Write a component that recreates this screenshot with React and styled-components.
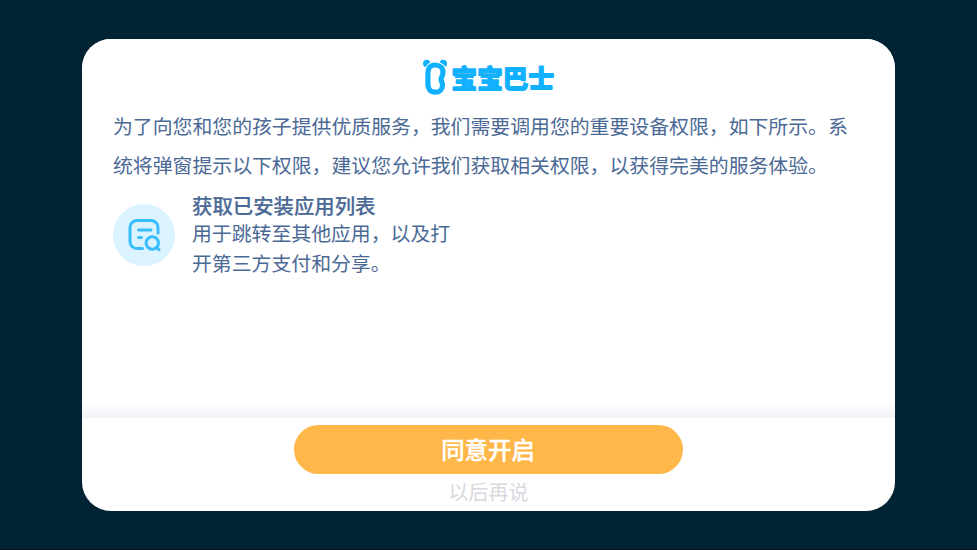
import React from "react"

import styled, { createGlobalStyle } from "styled-components"

const GlobalStyle = createGlobalStyle`
  * {
    box-sizing: border-box;
  }
  body {
    margin: 0;
    background: #022333;
    font-family: "Noto Sans CJK SC", sans-serif;
  }
`

const Logo = () => (
  <LogoWrapper>
    <svg width="26" height="38" viewBox="0 0 26 38" fill="none">
      <circle cx="4.700" cy="5.400" r="3.700" fill="#12b1ff" />
      <circle cx="21.300" cy="5.400" r="3.700" fill="#12b1ff" />
      <path
        d="M13 7C8.500 7 5.900 10.200 5.900 15v11c0 5.200 2.700 8.200 7.100 8.200 4.500 0 7.500-2.800 7.500-6.800 0-3-1.400-4-1.400-6.100 0-2.300 1.900-3.500 1.900-7.100 0-4.400-3.200-7.200-8-7.200Z"
        stroke="#fff"
        strokeWidth="7"
      />
      <path
        d="M13 7C8.500 7 5.900 10.200 5.900 15v11c0 5.200 2.700 8.200 7.100 8.200 4.500 0 7.500-2.800 7.500-6.800 0-3-1.400-4-1.400-6.100 0-2.300 1.900-3.500 1.900-7.100 0-4.400-3.200-7.200-8-7.200Z"
        stroke="#12b1ff"
        strokeWidth="5.200"
        strokeLinejoin="round"
      />
    </svg>
    <svg width="106" height="38" viewBox="0 0 106 38">
      <LogoText x="2.600" y="29.500">
        宝宝巴士
      </LogoText>
    </svg>
  </LogoWrapper>
)

const AppListIcon = () => (
  <IconCircle>
    <svg
      width="34"
      height="34"
      viewBox="0 0 34 34"
      fill="none"
      stroke="#38bdff"
      strokeWidth="3"
      strokeLinecap="round"
    >
      <path d="M15.500 30.500H10a7 7 0 0 1-7-7V9.500a7 7 0 0 1 7-7h14a7 7 0 0 1 7 7v5.500" />
      <path d="M11.500 12h12.500M11.500 19.500h3" />
      <circle cx="25.300" cy="25" r="6.200" />
      <path d="M29.800 29.500l2.200 2.200" />
    </svg>
  </IconCircle>
)

const Permission = ({ icon, title, children }) => (
  <PermissionWrapper>
    {icon}
    <div>
      <h3>{title}</h3>
      <p>{children}</p>
    </div>
  </PermissionWrapper>
)

const App = () => {
  return (
    <Screen>
      <GlobalStyle />
      <Dialog>
        <Content>
          <Logo />
          <Intro>
            为了向您和您的孩子提供优质服务，我们需要调用您的重要设备权限，如下所示。系统将弹窗提示以下权限，建议您允许我们获取相关权限，以获得完美的服务体验。
          </Intro>
          <Permission icon={<AppListIcon />} title="获取已安装应用列表">
            用于跳转至其他应用，以及打开第三方支付和分享。
          </Permission>
        </Content>
        <Footer>
          <AgreeButton>同意开启</AgreeButton>
          <LaterButton>以后再说</LaterButton>
        </Footer>
      </Dialog>
    </Screen>
  )
}

const Screen = styled.div`
  height: 550px;
  padding: 39px 82px 38px;
  border-bottom: 1px solid #04121f;
  background: #022333;
  overflow: hidden;
`

const Dialog = styled.div`
  display: flex;
  flex-direction: column;
  height: 472px;
  border-radius: 29px;
  background: #fff;
  overflow: hidden;
`

const Content = styled.div`
  height: 379px;
  padding: 19px 31px 0;
  background: linear-gradient(to top, #f1f2f7, #fff 15px);
`

const LogoWrapper = styled.div`
  display: flex;
  justify-content: center;
  gap: 1px;
  height: 38px;
`

const LogoText = styled.text`
  font-size: 25.500px;
  font-weight: 700;
  letter-spacing: 0.1px;
  fill: #12b1ff;
  stroke: #12b1ff;
  stroke-width: 1.8px;
  stroke-linejoin: round;
`

const Intro = styled.p`
  width: 745px;
  margin: 10px 0 0;
  color: #4b6995;
  font-size: 19.870px;
  line-height: 39px;
  text-spacing-trim: space-all;
`

const PermissionWrapper = styled.div`
  display: flex;
  margin-top: 8px;
  gap: 17px;
  color: #4b6995;
  h3 {
    margin: 0;
    font-size: 20.400px;
    font-weight: 500;
    line-height: 26px;
    -webkit-text-stroke: 0.2px #4b6995;
  }
  p {
    width: 262px;
    margin: 0;
    font-size: 19.870px;
    line-height: 29.500px;
    text-spacing-trim: space-all;
  }
`

const IconCircle = styled.div`
  display: flex;
  flex: none;
  align-items: center;
  justify-content: center;
  width: 62px;
  height: 62px;
  margin-top: 12px;
  border-radius: 50%;
  background: #daf3ff;
`

const Footer = styled.div`
  display: flex;
  flex: 1;
  flex-direction: column;
  align-items: center;
  padding-top: 7px;
`

const AgreeButton = styled.button`
  width: 389px;
  height: 49px;
  padding: 0 1px 2px 0;
  border: 0;
  border-radius: 25px;
  background: #ffb74a;
  color: #fff;
  font-family: inherit;
  font-size: 23.400px;
  font-weight: 500;
  -webkit-text-stroke: 0.4px #fff;
`

const LaterButton = styled.button`
  height: 34px;
  padding: 0;
  border: 0;
  background: none;
  color: #d8d9de;
  font-family: inherit;
  font-size: 20px;
`

export default App
